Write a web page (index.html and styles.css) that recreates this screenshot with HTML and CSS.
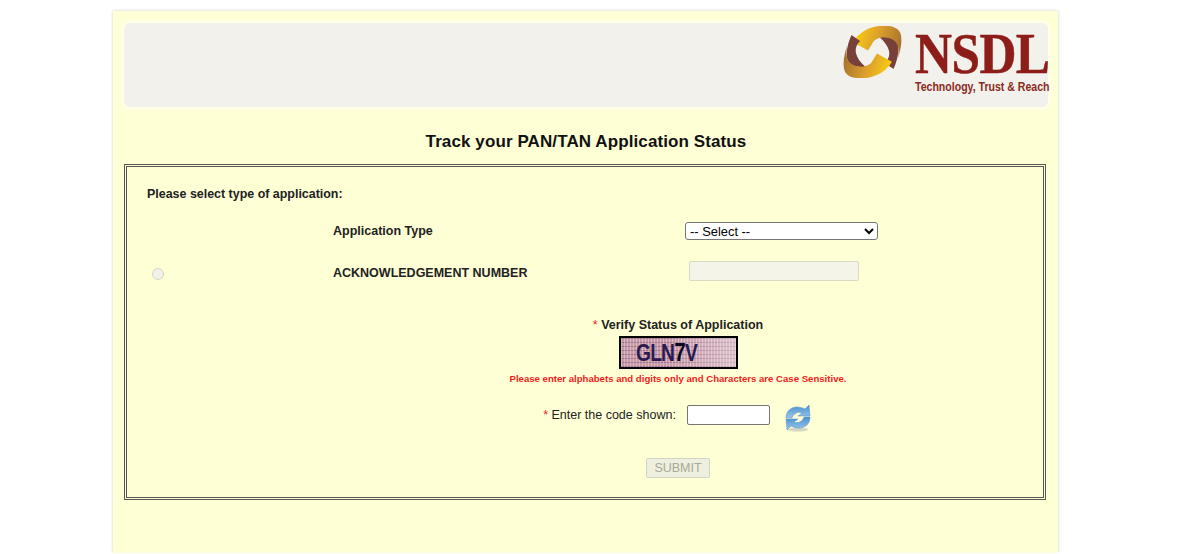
FILE: index.html
```html
<!DOCTYPE html>
<html lang="en">
<head>
    <meta charset="UTF-8">
    <title>Track your PAN/TAN Application Status</title>
    <link rel="stylesheet" href="styles.css">
</head>
<body>
    <div class="page">
        <!-- Header with logo -->
        <div class="header">
            <svg class="swirl" width="59" height="52" viewBox="38 78 177 157">
                <defs>
                    <linearGradient id="gold" gradientUnits="userSpaceOnUse" x1="75" y1="125" x2="215" y2="170">
                        <stop offset="0" stop-color="#f6c814"/>
                        <stop offset="0.4" stop-color="#dca02c"/>
                        <stop offset="1" stop-color="#a06a2e"/>
                    </linearGradient>
                    <g id="band">
                        <path d="M148 112 C175 108 198 116 203 135 C208 160 198 190 190 208 L164 190 C176 178 179 165 176 152 C173 138 163 126 148 112 Z" fill="#77403a"/>
                        <path d="M68 127 C80 105 105 85 140 79 C170 74 200 78 210 98 C218 118 212 150 203 175 C208 150 205 130 190 120 C170 108 145 110 130 124 L113 152 Z" fill="url(#gold)"/>
                    </g>
                </defs>
                <use href="#band"/>
                <use href="#band" transform="rotate(180 126.5 156.5)"/>
            </svg>
            <div class="brand">
                <div class="brand-name">NSDL</div>
                <div class="brand-tag">Technology, Trust &amp; Reach</div>
            </div>
        </div>

        <h1 class="title">Track your PAN/TAN Application Status</h1>

        <!-- Main form box -->
        <div class="form-box">
            <div class="select-label">Please select type of application:</div>

            <div class="row row-type">
                <div class="row-label">Application Type</div>
                <select class="type-select">
                    <option>-- Select --</option>
                </select>
            </div>

            <div class="row row-ack">
                <span class="radio"></span>
                <div class="row-label ack-label">ACKNOWLEDGEMENT NUMBER</div>
                <div class="ack-input"></div>
            </div>

            <div class="verify">
                <div class="verify-title"><span class="star">*</span> Verify Status of Application</div>
                <div class="captcha"><span class="captcha-text">GLN<b>7</b>V</span></div>
                <div class="captcha-note">Please enter alphabets and digits only and Characters are Case Sensitive.</div>
                <div class="code-row">
                    <label class="code-label"><span class="star">*</span> Enter the code shown:</label>
                    <input class="code-input" type="text">
                    <svg class="refresh" width="26" height="28" viewBox="0 0 26 28">
                        <defs>
                            <linearGradient id="blue" x1="0" y1="0" x2="0" y2="1">
                                <stop offset="0" stop-color="#4a90d2"/>
                                <stop offset="1" stop-color="#9ac6ea"/>
                            </linearGradient>
                        </defs>
                        <ellipse cx="13" cy="25.5" rx="10" ry="2" fill="#d6d6c4"/>
                        <path d="M1 14 C1 7 6 3 12 3 C15 3 18 4 20 5 L24 1 L25 12 L13 12 L17 9 C13 7 8 10 7 14 Z" fill="url(#blue)" stroke="#4d8cc4" stroke-width="0.5"/>
                        <path d="M25 13 C25 20 20 24 14 24 C11 24 8 23 6 22 L2 26 L1 15 L13 15 L9 18 C13 20 18 17 19 13 Z" fill="url(#blue)" stroke="#4d8cc4" stroke-width="0.5"/>
                    </svg>
                </div>
                <button class="submit" disabled>SUBMIT</button>
            </div>
        </div>
    </div>
</body>
</html>
```

FILE: styles.css
```css
body {
    margin: 0;
    background-color: #ffffff;
    font-family: "Liberation Sans", Arial, sans-serif;
    color: #222;
    overflow: hidden;
}
.page {
    box-sizing: border-box;
    width: 945px;
    height: 542px;
    margin: 11px 0 0 113px;
    padding: 12px 10px 0 11px;
    background-color: #ffffd6;
    box-shadow: 0 0 3px #cfcfc8;
}
.header {
    display: flex;
    justify-content: flex-end;
    align-items: flex-start;
    height: 84px;
    background-color: #f2f1eb;
    border-radius: 6px;
    box-shadow: 0 0 0 3px #ffffe6;
}
.swirl {
    margin-top: 3px;
    margin-right: 13px;
}
.brand {
    width: 135px;
    margin-right: -2px;
}
.brand-name {
    font-family: "Liberation Serif", serif;
    font-weight: bold;
    font-size: 56px;
    line-height: 42px;
    margin-top: 10px;
    letter-spacing: -0.6px;
    color: #8c1d18;
    -webkit-text-stroke: 0.5px #8c1d18;
    white-space: nowrap;
    transform: scaleX(0.915);
    transform-origin: left;
}
.brand-tag {
    font-size: 12px;
    font-weight: bold;
    line-height: 14px;
    margin-top: 5px;
    color: #8c2a22;
    white-space: nowrap;
    transform: scaleX(0.88);
    transform-origin: left;
}
.title {
    margin: 25px 0 12px;
    height: 20px;
    font-size: 17px;
    line-height: 20px;
    font-weight: bold;
    letter-spacing: 0.1px;
    text-align: center;
    color: #111;
}
.form-box {
    box-sizing: border-box;
    width: 922px;
    height: 336px;
    border: 3px double #555;
    padding: 19px 0 0 20px;
}
.select-label {
    font-size: 12.45px;
    font-weight: bold;
    line-height: 16px;
}
.row {
    display: flex;
    align-items: center;
}
.row-type {
    margin-top: 19px;
    height: 20px;
    padding-left: 186px;
}
.row-label {
    width: 352px;
    font-size: 12.5px;
    font-weight: bold;
}
.type-select {
    box-sizing: border-box;
    width: 193px;
    height: 18px;
    padding: 0;
    font-family: "Liberation Sans", Arial, sans-serif;
    font-size: 12.9px;
    background-color: #fff;
    border: 1px solid #767676;
    border-radius: 3px;
}
.row-ack {
    margin-top: 21px;
    height: 20px;
    padding-left: 5px;
}
.radio {
    box-sizing: border-box;
    width: 12px;
    height: 12px;
    margin-top: 3px;
    border: 1px solid #d6d6c6;
    border-radius: 50%;
    background-color: #f2f2ea;
}
.ack-label {
    width: 356px;
    margin-top: 2px;
    margin-left: 169px;
}
.ack-input {
    box-sizing: border-box;
    width: 170px;
    height: 20px;
    margin-top: -3px;
    background-color: #f4f4e8;
    border: 1px solid #d9d9c4;
    border-radius: 2px;
}
.verify {
    display: flex;
    flex-direction: column;
    align-items: center;
    width: 510px;
    margin: 35px 0 0 276px;
}
.verify-title {
    font-size: 12.5px;
    font-weight: bold;
    line-height: 16px;
}
.star {
    font-weight: normal;
    color: #f02020;
}
.captcha {
    box-sizing: border-box;
    width: 119px;
    height: 33px;
    margin-top: 3px;
    border: 2px solid #000;
    background-color: #c89aa6;
    background-image:
        linear-gradient(90deg, rgba(255,255,255,0) 40%, rgba(255,255,255,0.4) 100%),
        repeating-linear-gradient(90deg, rgba(255,255,255,0.3) 0 1px, transparent 1px 3px),
        repeating-linear-gradient(0deg, rgba(90,50,120,0.35) 0 1px, transparent 1px 4px);
}
.captcha-text {
    display: block;
    margin-left: 15px;
    font-size: 24px;
    line-height: 29px;
    font-weight: bold;
    letter-spacing: -1px;
    color: #2a1a50;
    transform: scaleX(0.8);
    transform-origin: left;
}
.captcha-text b {
    color: #0c0820;
    font-size: 26px;
}
.captcha-note {
    margin-top: 4px;
    font-size: 9.6px;
    font-weight: bold;
    line-height: 11px;
    color: #f01c1c;
    white-space: nowrap;
}
.code-row {
    display: flex;
    align-items: center;
    height: 28px;
    margin-top: 17px;
    margin-left: -2px;
}
.code-label {
    font-size: 12.5px;
    margin-right: 11px;
    white-space: nowrap;
}
.code-input {
    box-sizing: border-box;
    width: 83px;
    height: 20px;
    padding: 0;
    background-color: #fff;
    border: 1px solid #767676;
    border-radius: 2px;
    margin-top: -1px;
}
.refresh {
    margin-left: 15px;
    margin-top: 6px;
}
.submit {
    box-sizing: border-box;
    width: 64px;
    height: 20px;
    margin-top: 29px;
    padding: 0;
    font-family: "Liberation Sans", Arial, sans-serif;
    font-size: 12.5px;
    color: #a8a898;
    background-color: #efefdf;
    border: 1px solid #d4d4c4;
    border-radius: 2px;
}
```
